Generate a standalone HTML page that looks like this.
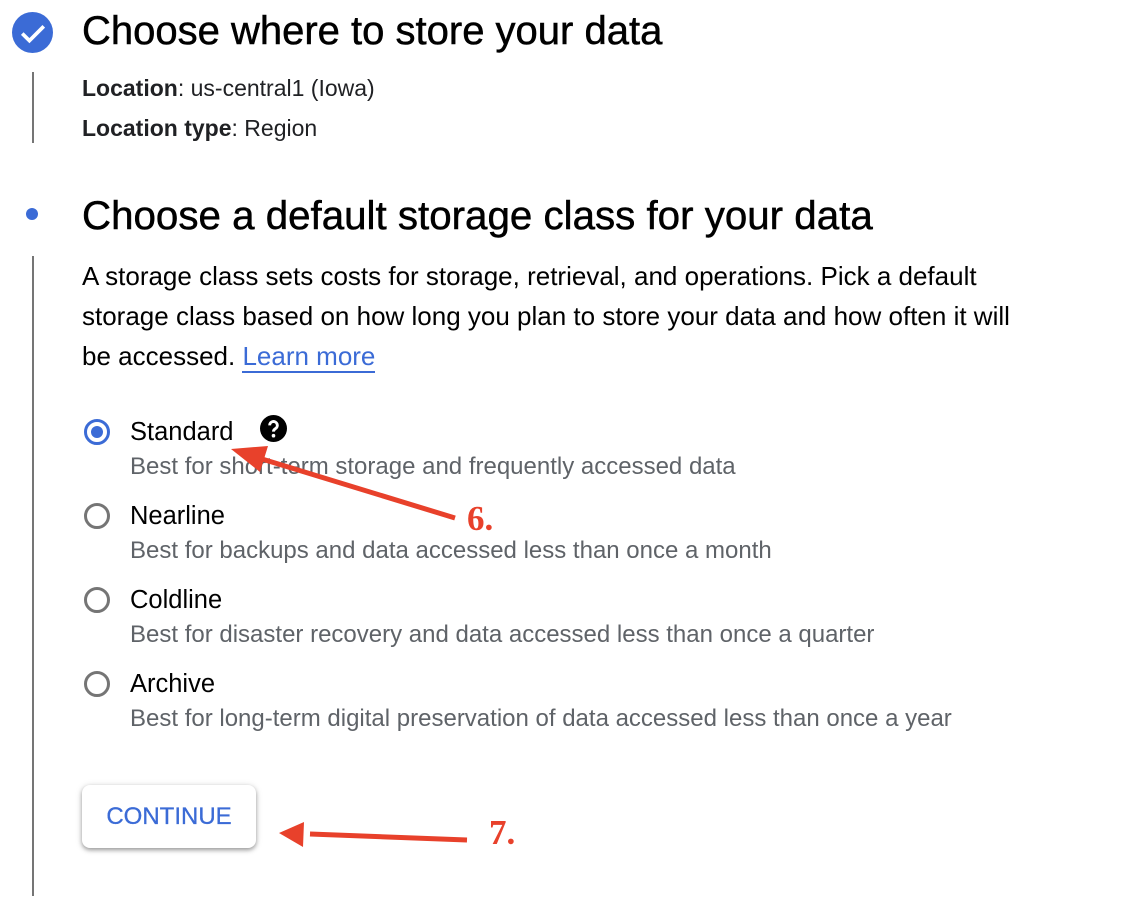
<!DOCTYPE html>
<html><head><meta charset="utf-8"><style>
body{margin:0;width:1142px;height:904px;background:#fff;position:relative;overflow:hidden;font-family:"Liberation Sans",Arial,sans-serif;color:#000}
.a{position:absolute;white-space:nowrap}
h1{position:absolute;margin:0;font-weight:normal;font-size:40px;white-space:nowrap;-webkit-text-stroke:0.5px #000}
.t{font-size:25.5px;line-height:40px}
.p{font-size:26px;line-height:40px}
.l{font-size:23px;line-height:40px;color:#202124}
.g{font-size:24px;color:#5f6368}
.r{position:absolute;width:26px;height:26px;border:3px solid #757575;border-radius:50%;box-sizing:border-box}
</style></head><body>
<svg class="a" style="left:12px;top:12px" width="41" height="41" viewBox="0 0 40 40"><circle cx="20" cy="20" r="20" fill="#3b6bd6"/><path d="M10 21l7 7 14-14" stroke="#fff" stroke-width="3.6" fill="none"/></svg>
<div class="a" style="left:32px;top:72px;width:2px;height:71px;background:#757575"></div>
<h1 style="left:82px;top:9px">Choose where to store your data</h1>
<div class="a l" style="left:82px;top:68px"><b>Location</b>: us-central1 (Iowa)</div>
<div class="a l" style="left:82px;top:108px"><b>Location type</b>: Region</div>
<div class="a" style="left:26px;top:208px;width:12px;height:12px;border-radius:50%;background:#3b6bd6"></div>
<div class="a" style="left:32px;top:256px;width:2px;height:640px;background:#757575"></div>
<h1 style="left:82px;top:193px;font-size:40.3px">Choose a default storage class for your data</h1>
<div class="a p" style="left:82px;top:256px">A storage class sets costs for storage, retrieval, and operations. Pick a default</div>
<div class="a p" style="left:82px;top:296px">storage class based on how long you plan to store your data and how often it will</div>
<div class="a p" style="left:82px;top:336px">be accessed. <span style="color:#3b6bd6;border-bottom:2px solid #3b6bd6">Learn more</span></div>

<div class="r" style="left:84px;top:419px;border-color:#3b6bd6"><div style="position:absolute;left:4px;top:4px;width:12px;height:12px;border-radius:50%;background:#3b6bd6"></div></div>
<div class="a t" style="left:130px;top:412px">Standard</div>
<svg class="a" style="left:260px;top:415px" width="27" height="27" viewBox="0 0 24 24"><circle cx="12" cy="12" r="12"/><path d="M8.6 9.2a3.4 3.4 0 1 1 5 3c-1.2.7-1.6 1.3-1.6 2.6" stroke="#fff" stroke-width="2.6" fill="none"/><circle cx="12" cy="18.4" r="1.6" fill="#fff"/></svg>
<div class="a g" style="left:130px;top:453px">Best for short-term storage and frequently accessed data</div>

<div class="r" style="left:84px;top:503px"></div>
<div class="a t" style="left:130px;top:496px">Nearline</div>
<div class="a g" style="left:130px;top:537px">Best for backups and data accessed less than once a month</div>

<div class="r" style="left:84px;top:587px"></div>
<div class="a t" style="left:130px;top:580px">Coldline</div>
<div class="a g" style="left:130px;top:621px">Best for disaster recovery and data accessed less than once a quarter</div>

<div class="r" style="left:84px;top:671px"></div>
<div class="a t" style="left:130px;top:664px">Archive</div>
<div class="a g" style="left:130px;top:705px">Best for long-term digital preservation of data accessed less than once a year</div>

<div class="a" style="left:82px;top:785px;width:174px;height:63px;border-radius:8px;background:#fff;box-shadow:0 2px 4px rgba(0,0,0,.35),0 1px 8px rgba(0,0,0,.12);color:#3b6bd6;font-size:24px;line-height:63px;text-align:center;-webkit-text-stroke:0.3px #3b6bd6">CONTINUE</div>

<svg class="a" style="left:0;top:0" width="1142" height="904">
<line x1="455" y1="518" x2="262" y2="459" stroke="#e8412b" stroke-width="5"/>
<polygon points="231,449 268,446 260,472" fill="#e8412b"/>
<line x1="467" y1="840" x2="310" y2="834" stroke="#e8412b" stroke-width="5"/>
<polygon points="279,833 304,822 303,847" fill="#e8412b"/>
</svg>
<div class="a" style="left:467px;top:499px;font-family:'Liberation Serif',serif;font-weight:bold;font-size:35px;color:#e8412b">6.</div>
<div class="a" style="left:489px;top:813px;font-family:'Liberation Serif',serif;font-weight:bold;font-size:35px;color:#e8412b">7.</div>
</body></html>
